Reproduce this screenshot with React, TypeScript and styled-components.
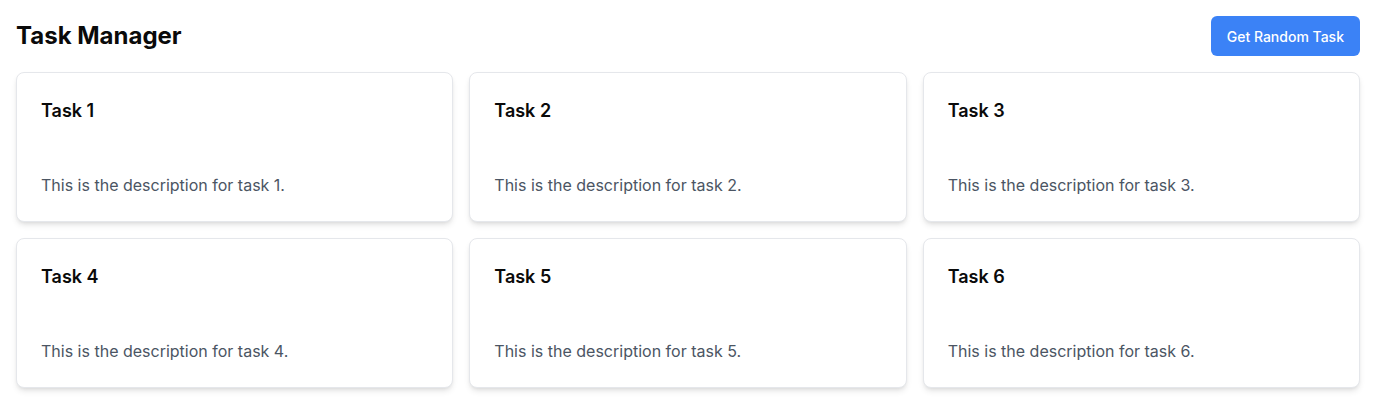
import React from "react";
import styled, { createGlobalStyle } from "styled-components";

const Global = createGlobalStyle`
  * { box-sizing: border-box; }
  body { margin: 0; background: #ffffff; font-family: Inter, "Noto Sans", sans-serif; color: #0a0a0a; }
`;

const Page = styled.div`
  padding: 16px;
`;

const Header = styled.header`
  display: flex;
  align-items: center;
  justify-content: space-between;
  height: 40px;
  margin-bottom: 16px;
`;

const Title = styled.h1`
  margin: 0;
  font-size: 24px;
  line-height: 32px;
  font-weight: 700;
`;

const Button = styled.button`
  height: 40px;
  padding: 0 16px;
  border: none;
  border-radius: 6px;
  background: #3b82f6;
  color: #ffffff;
  font-family: Inter, sans-serif;
  font-size: 14px;
  font-weight: 500;
  cursor: pointer;
`;

const Grid = styled.div`
  display: grid;
  grid-template-columns: repeat(3, 1fr);
  gap: 16px;
`;

const Card = styled.div`
  border: 1px solid #e5e7eb;
  border-radius: 8px;
  background: #ffffff;
  box-shadow: 0 4px 6px -1px rgba(0,0,0,0.1), 0 2px 4px -2px rgba(0,0,0,0.1);
`;

const CardHeader = styled.div`
  padding: 24px;
`;

const CardTitle = styled.h3`
  margin: 0;
  font-size: 18px;
  line-height: 28px;
  font-weight: 600;
`;

const CardContent = styled.div`
  padding: 24px;
`;

const Desc = styled.p`
  margin: 0;
  font-size: 16px;
  line-height: 24px;
  color: #4b5563;
`;

const tasks = [1, 2, 3, 4, 5, 6].map((n) => ({
  id: n,
  title: `Task ${n}`,
  description: `This is the description for task ${n}.`,
}));

export default function App() {
  return (
    <>
      <Global />
      <Page>
        <Header>
          <Title>Task Manager</Title>
          <Button>Get Random Task</Button>
        </Header>
        <Grid>
          {tasks.map((t) => (
            <Card key={t.id}>
              <CardHeader>
                <CardTitle>{t.title}</CardTitle>
              </CardHeader>
              <CardContent>
                <Desc>{t.description}</Desc>
              </CardContent>
            </Card>
          ))}
        </Grid>
      </Page>
    </>
  );
}
